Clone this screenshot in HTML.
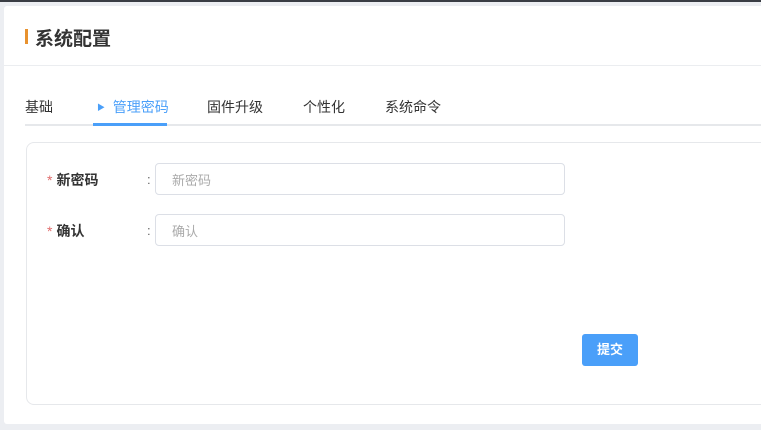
<!DOCTYPE html>
<html><head><meta charset="utf-8"><style>
*{margin:0;padding:0;box-sizing:border-box}
body{width:761px;height:430px;background:#eceef2;font-family:"Liberation Sans","Noto Sans CJK SC",sans-serif;position:relative;overflow:hidden}
.top{position:absolute;left:0;top:0;width:761px;height:2px;background:#3a3d44}
.panel{position:absolute;left:4px;top:6px;width:770px;height:418px;background:#fff;border-radius:3px}
.title{position:absolute;left:35px;top:24px;font-size:19px;font-weight:bold;color:#333}
.bar{position:absolute;left:25px;top:29px;width:3px;height:15px;background:#e8922f}
.hl{position:absolute;left:4px;top:65px;width:760px;height:1px;background:#ebedf0}
.tab{position:absolute;top:97px;font-size:14px;color:#333}
.tl{position:absolute;left:25px;top:124px;width:740px;height:2px;background:#e6e8eb}
.ta{position:absolute;left:93px;top:123px;width:74px;height:3px;background:#4a9ff9}
.card{position:absolute;left:26px;top:142px;width:760px;height:263px;border:1px solid #e6e8eb;border-radius:8px}
.lab{position:absolute;left:47px;font-size:14px;font-weight:bold;color:#333}
.lab b{color:#e06b6b;font-weight:normal;margin-right:4px}
.col{position:absolute;left:147px;font-size:13px;color:#666}
.inp{position:absolute;left:155px;width:410px;height:32px;border:1px solid #dcdfe6;border-radius:4px;font-size:13px;color:#aaa;padding:6px 0 0 16px}
.btn{position:absolute;left:582px;top:334px;width:56px;height:32px;background:#4a9ff9;border-radius:3px;color:#fff;font-size:13px;font-weight:bold;text-align:center;line-height:32px}
</style></head><body>
<div class="top"></div>
<div class="panel"></div>
<div class="bar"></div><div class="title">系统配置</div>
<div class="hl"></div>
<div class="tab" style="left:25px">基础</div>
<div class="tab" style="left:97px;color:#4a9ff9"><span style="font-size:8px;position:relative;top:-2px">▶</span>&nbsp;&nbsp;管理密码</div>
<div class="tab" style="left:207px">固件升级</div>
<div class="tab" style="left:303px">个性化</div>
<div class="tab" style="left:385px">系统命令</div>
<div class="tl"></div><div class="ta"></div>
<div class="card"></div>
<div class="lab" style="top:170px"><b>*</b>新密码</div>
<div class="col" style="top:172px">:</div>
<div class="inp" style="top:163px">新密码</div>
<div class="lab" style="top:221px"><b>*</b>确认</div>
<div class="col" style="top:223px">:</div>
<div class="inp" style="top:214px">确认</div>
<div class="btn">提交</div>
</body></html>
